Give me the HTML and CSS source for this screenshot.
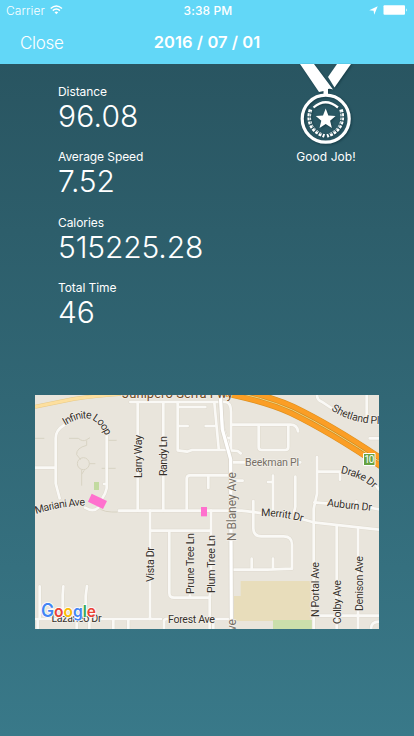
FILE: index.html
```html
<!DOCTYPE html>
<html lang="en">
<head>
<meta charset="utf-8">
<title>Workout summary</title>
<link rel="stylesheet" href="styles.css">
</head>
<body>
<header class="header">
  <div class="status">
    <div class="carrier"><span>Carrier</span>
      <svg width="13" height="10" viewBox="0 0 13 10" fill="none" stroke="#fff" stroke-width="1.5"><path d="M.7 3.5Q6.3-1.5 12 3.5M2.8 5.6Q6.3 2.4 9.9 5.6"/><path d="M4.5 7.2Q6.3 5.7 8.2 7.2L6.35 9.2z" fill="#fff" stroke="none"/></svg>
    </div>
    <span class="clock">3:38 PM</span>
    <div class="indicators">
      <svg width="9" height="9" viewBox="0 0 9 9"><path d="M8.700.2 5.200 8.800 4.600 4.700.2 4.200z" fill="#fff"/></svg>
      <svg width="25" height="10" viewBox="0 0 25 10"><rect x=".5" y=".3" width="21.5" height="9.4" rx="1" fill="#fff"/><path d="M23 3.2q1.7 1.8 0 3.6z" fill="#fff"/></svg>
    </div>
  </div>
  <nav class="nav"><a class="close">Close</a><h1 class="title">2016 / 07 / 01</h1><span></span></nav>
</header>
<main>
  <div class="summary">
    <dl class="stats">
      <div class="stat"><dt>Distance</dt><dd class="wide">96.08</dd></div>
      <div class="stat"><dt>Average Speed</dt><dd>7.52</dd></div>
      <div class="stat"><dt>Calories</dt><dd>515225.28</dd></div>
      <div class="stat"><dt>Total Time</dt><dd>46</dd></div>
    </dl>
    <div class="award">
      <svg class="medal" width="60" height="84" viewBox="296 64 60 84">
        <path d="M300 64h14l19 25.500q-3-1-5-.5v4h-4v-2l-5 1z" fill="#fff"/>
        <path d="M337 64h14l-16.500 23.500-6.500-10.500z" fill="#fff"/>
        <path d="M323.500 89h4.500v7h-4.500z" fill="#fff"/>
        <circle cx="325.700" cy="118.700" r="23.500" fill="none" stroke="#fff" stroke-width="3.200"/>
        <path d="M313.500 107.500q12-10.500 24.500 0" fill="none" stroke="#fff" stroke-width="2.300"/>
        <path d="m325.700 108.500 2.700 6.900 7.200.5-5.500 4.800 1.800 7.300-6.200-4-6.200 4 1.800-7.300-5.500-4.800 7.200-.5z" fill="#fff"/>
        <g fill="none" stroke="#fff" stroke-width="3.600" stroke-dasharray="2.900 1.100"><path d="M310.500 109.500C306.500 122 312 132 324.500 136"/><path d="M341 109.500C345 122 339.500 132 327 136"/></g>
        <g fill="none" stroke="#295763" stroke-width=".6"><path d="M310.500 111.500C307.500 122 313 130.500 323 134.500"/><path d="M341 111.500C344 122 338.500 130.500 328.500 134.500"/></g>
      </svg>
      <p class="praise">Good Job!</p>
    </div>
  </div>
  <svg class="map" width="344" height="234" viewBox="35 395 344 234">
    <rect x="35" y="395" width="344" height="234" fill="#e9e5dc"/>
    <g transform="translate(35 395)scale(.33333)">
      <path d="M617 558h210v120H597v-75h20z" fill="#e8ddbb"/>
      <path d="M714 675h120v28H714z" fill="#cbdfab"/>
      <path d="M177 261h15v24h-15z" fill="#c2daa0"/>
      <g fill="none" stroke="#d8d3c3" stroke-width="3"><circle cx="145" cy="206" r="18"/><path d="M0 130h28M102 130h28q14 12 25 4l10-6M220 136h25M155 136v15q-32 8-30 28l12 15M163 206h18M140 225v47M140 238l8-12M200 220h42M185 325q5 25 45 26h18"/></g>
      <g class="casing"><use href="#streets"/></g>
      <g class="road"><g id="streets">
        <path d="M286 21h284q18 0 18 30v115l20 2 9 7M308 21v326M385 21v326M428 23v143l28 4 15-5h115M428 36h83M430 93h28M512 93h28M538 23l13 137"/>
        <path d="M0 218h60M88 90Q62 105 62 130v135l12 45M215 122v158q-4 18-12 28M207 267h8M150 338q25 15 40 0"/>
        <path d="M252 347h368l64 8M800 372l35 10 200 22M555 23l10 78 20 60M572 129h15"/>
        <path d="M592 89h175q19 0 22 20M671 91v66q0 8 8 8h72q9 0 9-9V93M590 202h40M790 202h6M455 343v-92q0-10 10-10h120M520 243v36M595 257h28"/>
        <path d="M345 347v325M345 407h183M403 408v186q0 14 14 14h108M528 347v237l-4 20v98M465 601v7"/>
        <path d="M655 318v82q0 24 24 24h67q25 0 25 25v72l-75 3h-99M650 491v30M714 491v30M699 261h15M714 242v103M781 245v90l-4 18"/>
        <path d="M846 186v110l-10 45v361M847 230h68v24M838 322l44 4M1020 263q8 20 15 22M1010 339l25 5M964 319v8"/>
        <path d="M846 0q0 15 14 20l38 25M995 0v70M1004 130h30M905 394v308M969 402v300M850 662h182M1008 702q0-22 24-22"/>
        <path d="M14 574v98M85 574l-2 26v72M156 573l-4 30v69M0 672h378M540 672h50M387 702v-25q2-6 12-5M125 675v27M163 675v27M235 672v30M280 672v30M8 672v30M535 702v-18"/>
      </g></g>
      <path class="main-casing" d="M556 0l6 103 25 90 2 510"/><path class="main-road" d="M556 0l6 103 25 90 2 510"/>
      <path d="M0 35 115 12Q180 2 280-5" fill="none" stroke="#e7c987" stroke-width="12"/><path d="M0 35 115 12Q180 2 280-5" fill="none" stroke="#fddf9e" stroke-width="9"/>
      <g fill="none"><path d="M540-21Q690 7 772 45Q890 102 1045 207" stroke="#dc9020" stroke-width="38"/><path d="M540-21Q690 7 772 45Q890 102 1045 207" stroke="#fb9e25" stroke-width="34"/><path d="M540-21Q690 7 772 45Q890 102 1045 207" stroke="#cb8921" stroke-width="6"/><path d="M540-21Q690 7 772 45Q890 102 1045 207" stroke="#f2d27b" stroke-width="3"/></g>
      <path d="M170 296 216 318 204 342 159 320z" fill="#ff70ce"/><path d="M498 336h18v28h-18z" fill="#ff70ce"/>
    </g>
    <g class="labels">
      <defs>
        <path id="infinite" d="M65 425.500Q87 412 98 424Q105 432 107 440"/>
        <path id="mariani" d="M36 514Q60 506 87 505.500"/>
        <path id="shetland" d="M331 410Q352 424 382 424"/>
        <path id="drake" d="M340.500 473Q362 477 375 490"/>
        <path id="merritt" d="M261 516Q282 516 304 522"/>
        <path id="auburn" d="M327 506Q348 509 373 511"/>
      </defs>
      <text class="fwy" x="122" y="397.500" textLength="111">Junipero Serra Fwy</text>
      <text><textPath href="#infinite" textLength="50">Infinite Loop</textPath></text>
      <text><textPath href="#mariani" textLength="50">Mariani Ave</textPath></text>
      <text><textPath href="#shetland" textLength="51">Shetland Pl</textPath></text>
      <text><textPath href="#drake" textLength="37">Drake Dr</textPath></text>
      <text><textPath href="#merritt" textLength="42">Merritt Dr</textPath></text>
      <text><textPath href="#auburn" textLength="45">Auburn Dr</textPath></text>
      <text class="minor" x="245" y="466" textLength="54">Beekman Pl</text>
      <text x="168" y="622.500" textLength="47">Forest Ave</text>
      <text x="51.500" y="622" textLength="50">Lazaneo Dr</text>
      <text transform="translate(142 478)rotate(-90)" textLength="43">Larry Way</text>
      <text transform="translate(167 476)rotate(-90)" textLength="40">Randy Ln</text>
      <text transform="translate(153.500 582)rotate(-90)" textLength="35">Vista Dr</text>
      <text transform="translate(194 594)rotate(-90)" textLength="61">Prune Tree Ln</text>
      <text transform="translate(215 593)rotate(-90)" textLength="58">Plum Tree Ln</text>
      <text class="minor big" transform="translate(236 541)rotate(-90)" textLength="69">N Blaney Ave</text>
      <text class="minor big" transform="translate(236 688)rotate(-90)" textLength="69">N Blaney Ave</text>
      <text transform="translate(318.500 617)rotate(-90)" textLength="55">N Portal Ave</text>
      <text transform="translate(341 624)rotate(-90)" textLength="44">Colby Ave</text>
      <text transform="translate(362.500 611)rotate(-90)" textLength="55">Denison Ave</text>
    </g>
    <path d="M363.500 453.500h11.500v12h-11.500z" fill="#67a343" stroke="#fff" stroke-width="1"/><text class="shield" x="364.300" y="463.300" textLength="10">10</text>
    <text class="google" x="41" y="616.800" textLength="55" lengthAdjust="spacingAndGlyphs"><tspan class="initial" fill="#4285f4">G</tspan><tspan fill="#ea4335">o</tspan><tspan fill="#fbbc05">o</tspan><tspan fill="#4285f4">g</tspan><tspan fill="#34a853">l</tspan><tspan fill="#ea4335">e</tspan></text>
  </svg>
</main>
</body>
</html>
```

FILE: styles.css
```css
* { box-sizing: border-box; margin: 0; padding: 0; }
body {
  width: 414px; height: 736px; overflow: hidden;
  font-family: Inter, "Liberation Sans", sans-serif; color: #fff;
  background: linear-gradient(#295561 64px, #397989);
}
svg { display: block; }
.header { height: 64px; background: #62d7f7; }
.status { height: 20px; padding: 0 6px; display: grid; grid-template-columns: 1fr auto 1fr; align-items: center; font-size: 12px; }
.carrier { display: flex; align-items: center; gap: 5px; font-weight: 300; letter-spacing: .1px; }
.clock { padding-left: 2px; font-weight: 500; letter-spacing: .1px; }
.indicators { display: flex; justify-content: flex-end; align-items: center; gap: 5px; }
.nav { height: 44px; padding: 0 20px; display: grid; grid-template-columns: 1fr auto 1fr; align-items: center; }
.close { font-size: 17px; font-weight: 300; letter-spacing: -.3px; padding-top: 1px; }
.title { font-size: 16.500px; font-weight: 600; letter-spacing: .07px; }
.summary { height: 331px; padding: 0 58px 0 58px; display: flex; justify-content: space-between; align-items: flex-start; }
.stats { padding-top: 20px; }
.stat { height: 65.400px; }
.stat dt { font-size: 12px; line-height: 15px; letter-spacing: -.08px; }
.stat dd { font-size: 30px; line-height: 35px; font-weight: 300; letter-spacing: -.15px; }
.stat .wide { letter-spacing: .2px; }
.award { width: 60px; display: flex; flex-direction: column; align-items: center; }
.medal { filter: drop-shadow(1px 1px 1px #173d48); }
.praise { padding-top: 1px; font-size: 12px; line-height: 16px; white-space: nowrap; letter-spacing: .05px; }
.map { margin-left: 35px; }
.road, .casing, .main-road, .main-casing { fill: none; stroke-linejoin: round; stroke-linecap: round; }
.casing { stroke: #dfdacf; stroke-width: 11px; }
.road { stroke: #faf9f6; stroke-width: 8px; }
.main-casing { stroke: #d9d4ca; stroke-width: 14px; }
.main-road { stroke: #fff; stroke-width: 10px; }
.labels text { font: 10.700px Roboto, sans-serif; fill: #38322c; stroke: #f2efe9; stroke-width: 1.500px; paint-order: stroke; stroke-linejoin: round; }
.labels .minor { fill: #776f66; }
.labels .big { font-size: 12px; }
.labels .fwy { font-size: 13px; fill: #744a1e; }
.shield { font: 10px Roboto, sans-serif; fill: #fff; }
.google { font: 600 16px Inter, sans-serif; stroke: #fff; stroke-width: 1.500px; paint-order: stroke; }
.google .initial { font-size: 18px; }
```
